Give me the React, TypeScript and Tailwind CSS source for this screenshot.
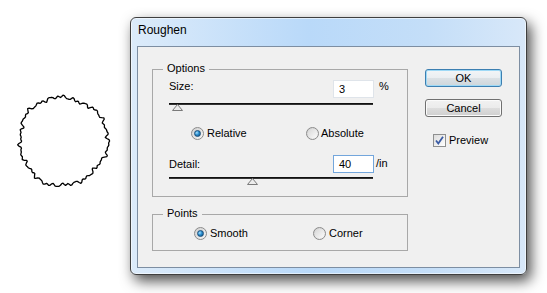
import React from 'react';

const font = { fontFamily: '"Liberation Sans", Arial, sans-serif' };

// wobbly outline of the roughened circle
function roughPath() {
  const cx = 63;
  const cy = 141;
  const n = 220;
  const pts: string[] = [];
  for (let i = 0; i <= n; i++) {
    const a = (i / n) * Math.PI * 2;
    const r =
      44 +
      1.0 * Math.sin(23 * a + 0.4) +
      0.8 * Math.sin(37 * a + 1.7) +
      0.7 * Math.sin(53 * a + 2.9) +
      1.2 * Math.sin(3 * a + 2.1) +
      0.8 * Math.sin(7 * a + 0.3);
    const x = cx + r * Math.cos(a);
    const y = cy + r * Math.sin(a);
    pts.push(`${i === 0 ? 'M' : 'L'}${x.toFixed(2)} ${y.toFixed(2)}`);
  }
  return pts.join(' ') + ' Z';
}

function Radio({ checked }: { checked?: boolean }) {
  return (
    <div className="flex h-[13px] w-[13px] shrink-0 items-center justify-center rounded-full border border-[#8b8b8b] bg-[linear-gradient(135deg,#cfcfcf,#f8f8f8)]">
      {checked ? (
        <div className="h-[7px] w-[7px] rounded-full border border-[#1b4f7a] bg-[radial-gradient(circle_at_35%_35%,#a9e2ff_0%,#2a8ed0_45%,#0c4c7c_100%)]" />
      ) : (
        <div className="h-[9px] w-[9px] rounded-full bg-[linear-gradient(135deg,#d8d8d8,#fafafa)]" />
      )}
    </div>
  );
}

function Slider({ thumb }: { thumb: number }) {
  return (
    <div className="relative h-[8px] w-[204px]">
      <div className="h-[2px] w-full bg-[linear-gradient(#000,#444)]" />
      <svg
        className="absolute top-[1px]"
        style={{ left: thumb }}
        width="11"
        height="7"
        viewBox="0 0 11 7"
      >
        <polygon points="5.5,0.5 10.5,6.5 0.5,6.5" fill="#ececec" stroke="#7a7a7a" />
      </svg>
    </div>
  );
}

function GroupBox({
  label,
  className,
  children,
}: {
  label: string;
  className: string;
  children: React.ReactNode;
}) {
  return (
    <div className={`relative w-[256px] border border-[#a8a8a8] pl-[16px] pr-[8px] ${className}`}>
      <span className="absolute left-[10px] -top-[8px] bg-[#f0f0f0] px-[4px] text-[11px] leading-[13px] text-black">
        {label}
      </span>
      {children}
    </div>
  );
}

export default function App() {
  return (
    <div className="flex h-[293px] w-[547px] overflow-hidden bg-white text-[11px] leading-[13px] text-black" style={font}>
      <div className="h-full w-[130px] shrink-0">
        <svg width="130" height="293">
          <path d={roughPath()} fill="none" stroke="#000" strokeWidth="1.3" strokeLinejoin="round" />
        </svg>
      </div>

      <div className="pt-[17px]">
        <div className="h-[258px] w-[397px] rounded-[6px] border border-[#3f3f3f] bg-[linear-gradient(to_right,#dcebfa_0%,#b9d9f9_45%,#c4def8_75%,#d8e8f9_100%)] px-[6px] pb-[6px] shadow-[4px_6px_14px_rgba(0,0,0,0.7),inset_0_0_0_1px_rgba(255,255,255,0.55)]">
          <div className="h-[28px] pl-[1px] pt-[4px] text-[12px] leading-[16px] text-black">Roughen</div>

          <div className="flex h-[222px] w-[383px] border border-[#7d8ea2] bg-[#f0f0f0] pl-[14px] pt-[22px]">
            <div className="w-[256px]">
              <GroupBox label="Options" className="h-[128px] pt-[10px]">
                <div className="flex h-[18px] items-start">
                  <span className="flex-1">Size:</span>
                  <div className="h-[18px] w-[41px] border border-[#dfe4ea] bg-white pl-[5px] pt-[2px]">3</div>
                  <span className="w-[25px] pl-[5px]">%</span>
                </div>
                <div className="mt-[5px]">
                  <Slider thumb={3} />
                </div>
                <div className="mt-[16px] flex h-[13px] items-center">
                  <div className="ml-[22px] flex w-[115px] items-center gap-[3px]">
                    <Radio checked />
                    <span>Relative</span>
                  </div>
                  <div className="flex items-center gap-[2px]">
                    <Radio />
                    <span>Absolute</span>
                  </div>
                </div>
                <div className="mt-[15px] flex h-[18px] items-start">
                  <span className="mt-[3px] flex-1">Detail:</span>
                  <div className="h-[18px] w-[41px] border border-[#73a6dc] bg-white pl-[5px] pt-[2px]">40</div>
                  <span className="w-[25px] pl-[2px] pt-[2px]">/in</span>
                </div>
                <div className="mt-[4px]">
                  <Slider thumb={78} />
                </div>
              </GroupBox>

              <GroupBox label="Points" className="mt-[17px] h-[37px] pt-[12px]">
                <div className="flex h-[13px] items-center">
                  <div className="ml-[25px] flex w-[119px] items-center gap-[3px]">
                    <Radio checked />
                    <span>Smooth</span>
                  </div>
                  <div className="flex items-center gap-[3px]">
                    <Radio />
                    <span>Corner</span>
                  </div>
                </div>
              </GroupBox>
            </div>

            <div className="ml-[17px] w-[77px]">
              <button className="flex h-[18px] w-[77px] items-center justify-center rounded-[3px] border border-[#3c7fb1] bg-[linear-gradient(#f2f5f7_0%,#eaeef1_50%,#dbe1e5_51%,#ced6db_100%)] shadow-[inset_0_0_0_1px_#9ed9f6] text-[11px] leading-[13px]">
                OK
              </button>
              <button className="mt-[12px] flex h-[18px] w-[77px] items-center justify-center rounded-[3px] border border-[#707070] bg-[linear-gradient(#f2f2f2_0%,#ebebeb_50%,#dddddd_51%,#cfcfcf_100%)] shadow-[inset_0_0_0_1px_#fbfbfb] text-[11px] leading-[13px]">
                Cancel
              </button>
              <div className="ml-[8px] mt-[17px] flex items-center gap-[3px]">
                <div className="flex h-[13px] w-[13px] items-center justify-center border border-[#8e8f8f] bg-[linear-gradient(135deg,#dcdcdc,#ffffff)]">
                  <svg width="11" height="11" viewBox="0 0 11 11">
                    <path d="M2 5.5 L4.3 8.5 L9 1.8" fill="none" stroke="#3a5ba4" strokeWidth="1.8" />
                  </svg>
                </div>
                <span>Preview</span>
              </div>
            </div>
          </div>
        </div>
      </div>
    </div>
  );
}
